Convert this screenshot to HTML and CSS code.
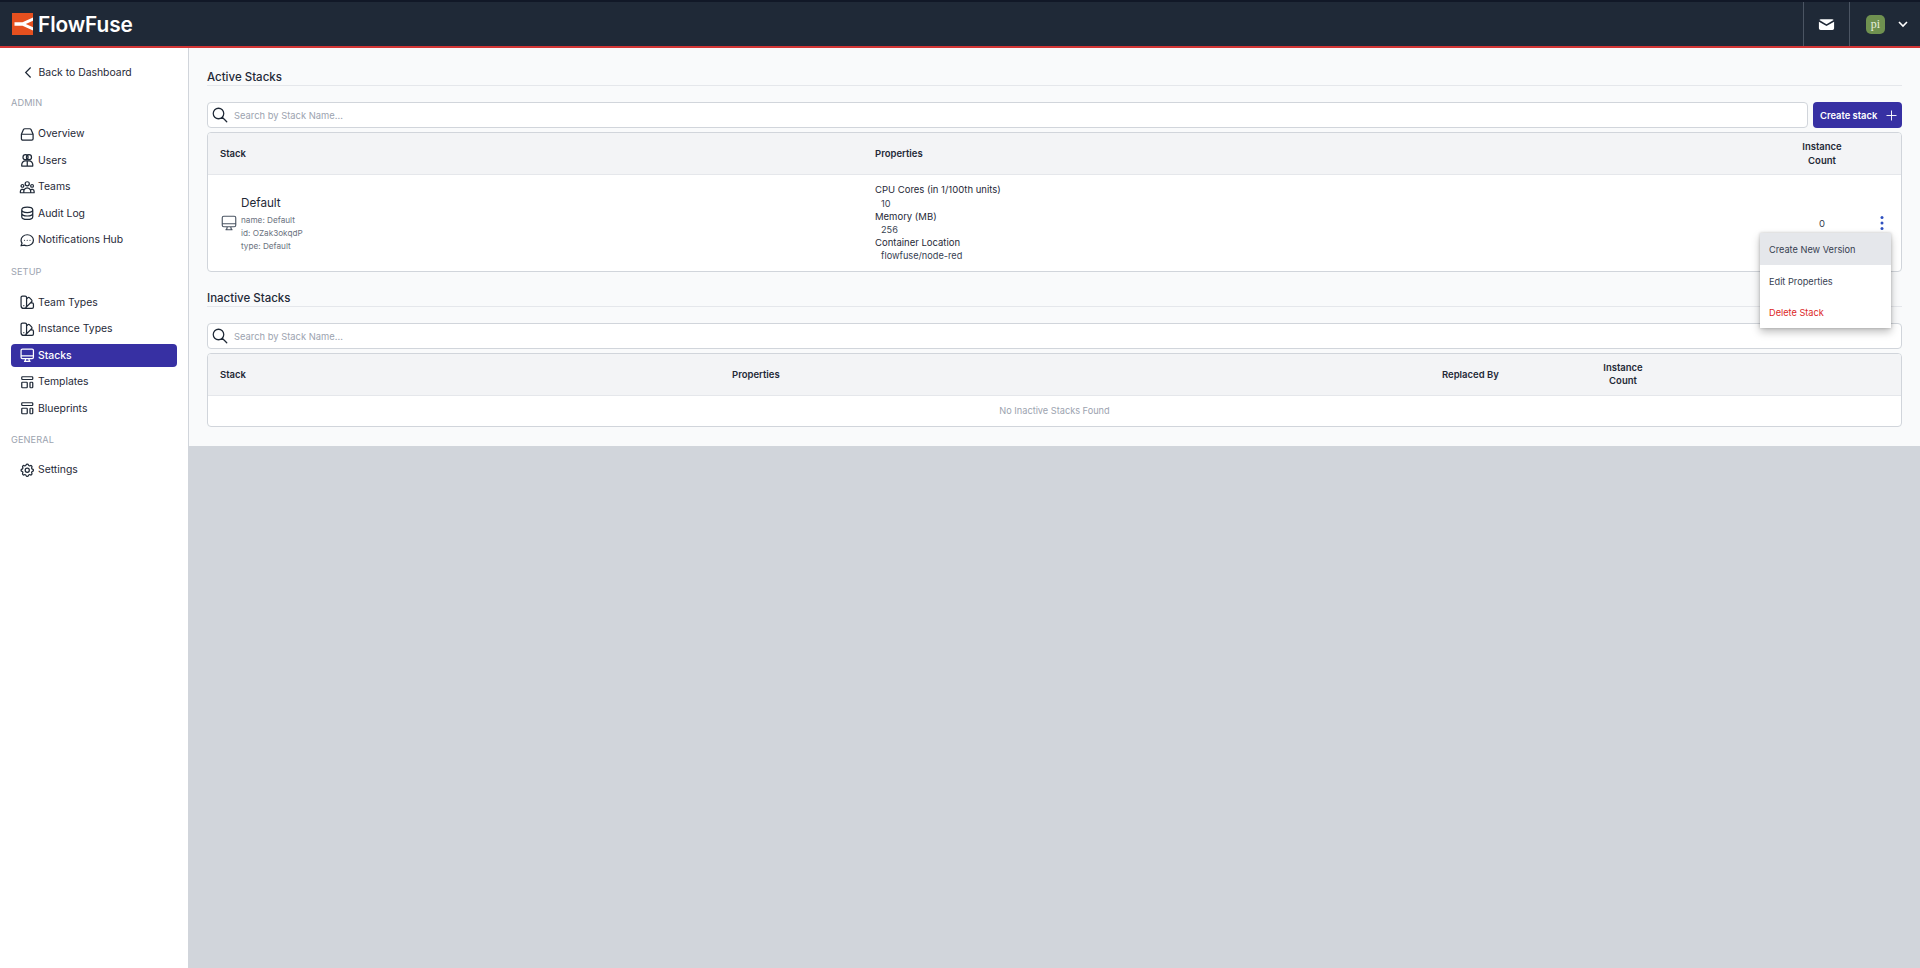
FILE: index.html
```html
<!DOCTYPE html>
<html lang="en">
<head>
<meta charset="utf-8">
<title>Stacks - FlowFuse</title>
<link rel="stylesheet" href="styles.css">
</head>
<body>
<header class="topbar">
  <a class="logo">
    <svg class="logo-mark" viewBox="0 0 21 22"><rect width="21" height="22" fill="#e5501f"/><path d="M21 4.500 10.500 9.200H2.500v3.600h8L21 17.500v-3.300L13.800 11 21 7.800z" fill="#fff"/></svg>
    <span class="logo-text">FlowFuse</span>
  </a>
  <div class="topbar-right">
    <div class="top-cell mail">
      <svg class="mail-icon" viewBox="0 0 20 20"><path d="M2.500 5.200A2 2 0 0 1 4 4.500h12a2 2 0 0 1 1.500.7L10 9.700z" fill="#fff"/><path d="M2 7l8 4.700L18 7v7a1.800 1.800 0 0 1-1.800 1.800H3.800A1.800 1.800 0 0 1 2 14z" fill="#fff"/></svg>
    </div>
    <div class="top-cell user">
      <span class="avatar">pi</span>
      <svg class="chev" viewBox="0 0 12 12"><path d="M2 4l4 4 4-4" fill="none" stroke="#fff" stroke-width="1.600"/></svg>
    </div>
  </div>
</header>
<div class="shell">
  <aside class="sidebar">
    <a class="back"><svg class="back-icon" viewBox="0 0 24 24"><path d="M15 19l-7-7 7-7"/></svg><span>Back to Dashboard</span></a>
    <div class="nav-title first">Admin</div>
    <a class="nav-item"><svg viewBox="0 0 24 24"><path d="M3.500 12h17v6.500a2 2 0 0 1-2 2h-13a2 2 0 0 1-2-2zM3.500 12 6.500 5.200A2.200 2.200 0 0 1 8.500 4h7a2.200 2.200 0 0 1 2 1.200l3 6.800"/></svg>Overview</a>
    <a class="nav-item"><svg viewBox="0 0 24 24"><circle cx="9.500" cy="7.500" r="3.700"/><circle cx="14.500" cy="7.500" r="3.700"/><path d="M4 20.500v-2.200A5.300 5.300 0 0 1 9.300 13h5.400a5.300 5.300 0 0 1 5.300 5.300v2.200zM12 13.500v7"/></svg>Users</a>
    <a class="nav-item"><svg viewBox="0 0 24 24"><path d="M17 20h5v-2a3 3 0 00-5.356-1.857M17 20H7m10 0v-2c0-.656-.126-1.283-.356-1.857M7 20H2v-2a3 3 0 015.356-1.857M7 20v-2c0-.656.126-1.283.356-1.857m0 0a5.002 5.002 0 019.288 0M15 7a3 3 0 11-6 0 3 3 0 016 0zm6 3a2 2 0 11-4 0 2 2 0 014 0zM7 10a2 2 0 11-4 0 2 2 0 014 0z"/></svg>Teams</a>
    <a class="nav-item"><svg viewBox="0 0 24 24"><path d="M4 7v10c0 2.210 3.582 4 8 4s8-1.790 8-4V7M4 7c0 2.210 3.582 4 8 4s8-1.790 8-4M4 7c0-2.210 3.582-4 8-4s8 1.790 8 4m0 5c0 2.210-3.582 4-8 4s-8-1.790-8-4"/></svg>Audit Log</a>
    <a class="nav-item"><svg viewBox="0 0 24 24"><path d="M8 12h.01M12 12h.01M16 12h.01M21 12c0 4.418-4.030 8-9 8a9.863 9.863 0 01-4.255-.949L3 20l1.395-3.720C3.512 15.042 3 13.574 3 12c0-4.418 4.030-8 9-8s9 3.582 9 8z"/></svg>Notifications Hub</a>
    <div class="nav-title">Setup</div>
    <a class="nav-item"><svg viewBox="0 0 24 24"><path d="M7 21a4 4 0 01-4-4V5a2 2 0 012-2h4a2 2 0 012 2v12a4 4 0 01-4 4zm0 0h12a2 2 0 002-2v-4a2 2 0 00-2-2h-2.343M11 7.343l1.657-1.657a2 2 0 012.828 0l2.829 2.829a2 2 0 010 2.828l-8.486 8.485M7 17h.01"/></svg>Team Types</a>
    <a class="nav-item"><svg viewBox="0 0 24 24"><path d="M7 21a4 4 0 01-4-4V5a2 2 0 012-2h4a2 2 0 012 2v12a4 4 0 01-4 4zm0 0h12a2 2 0 002-2v-4a2 2 0 00-2-2h-2.343M11 7.343l1.657-1.657a2 2 0 012.828 0l2.829 2.829a2 2 0 010 2.828l-8.486 8.485M7 17h.01"/></svg>Instance Types</a>
    <a class="nav-item active"><svg viewBox="0 0 24 24"><path d="M9.750 17L9 20l-1 1h8l-1-1-.75-3M3 13h18M5 17h14a2 2 0 002-2V5a2 2 0 00-2-2H5a2 2 0 00-2 2v10a2 2 0 002 2z"/></svg>Stacks</a>
    <a class="nav-item"><svg viewBox="0 0 24 24"><path d="M4 5a1 1 0 011-1h14a1 1 0 011 1v2a1 1 0 01-1 1H5a1 1 0 01-1-1V5zM4 13a1 1 0 011-1h6a1 1 0 011 1v6a1 1 0 01-1 1H5a1 1 0 01-1-1v-6zM16 13a1 1 0 011-1h2a1 1 0 011 1v6a1 1 0 01-1 1h-2a1 1 0 01-1-1v-6z"/></svg>Templates</a>
    <a class="nav-item"><svg viewBox="0 0 24 24"><path d="M4 5a1 1 0 011-1h14a1 1 0 011 1v2a1 1 0 01-1 1H5a1 1 0 01-1-1V5zM4 13a1 1 0 011-1h6a1 1 0 011 1v6a1 1 0 01-1 1H5a1 1 0 01-1-1v-6zM16 13a1 1 0 011-1h2a1 1 0 011 1v6a1 1 0 01-1 1h-2a1 1 0 01-1-1v-6z"/></svg>Blueprints</a>
    <div class="nav-title last">General</div>
    <a class="nav-item"><svg viewBox="0 0 24 24"><path d="M10.325 4.317c.426-1.756 2.924-1.756 3.350 0a1.724 1.724 0 002.573 1.066c1.543-.94 3.310.826 2.370 2.370a1.724 1.724 0 001.065 2.572c1.756.426 1.756 2.924 0 3.350a1.724 1.724 0 00-1.066 2.573c.94 1.543-.826 3.310-2.370 2.370a1.724 1.724 0 00-2.572 1.065c-.426 1.756-2.924 1.756-3.350 0a1.724 1.724 0 00-2.573-1.066c-1.543.94-3.310-.826-2.370-2.370a1.724 1.724 0 00-1.065-2.572c-1.756-.426-1.756-2.924 0-3.350a1.724 1.724 0 001.066-2.573c-.94-1.543.826-3.310 2.370-2.370.996.608 2.296.07 2.572-1.065z"/><path d="M15 12a3 3 0 11-6 0 3 3 0 016 0z"/></svg>Settings</a>
  </aside>
  <main class="main">
    <div class="content">
      <h2 class="section-title">Active Stacks</h2>
      <div class="toolbar">
        <label class="search"><svg viewBox="0 0 24 24"><path d="M21 21l-6-6m2-5a7 7 0 11-14 0 7 7 0 0114 0z"/></svg><span class="placeholder">Search by Stack Name...</span></label>
        <button class="btn-primary">Create stack<svg viewBox="0 0 24 24"><path d="M12 4v16M4 12h16"/></svg></button>
      </div>
      <div class="table active-table">
        <div class="row head">
          <div class="cell">Stack</div>
          <div class="cell">Properties</div>
          <div class="cell center">Instance<br>Count</div>
          <div class="cell"></div>
        </div>
        <div class="row body">
          <div class="cell stack-cell">
            <svg class="stack-icon" viewBox="0 0 24 24"><path d="M9.750 17L9 20l-1 1h8l-1-1-.75-3M3 13h18M5 17h14a2 2 0 002-2V5a2 2 0 00-2-2H5a2 2 0 00-2 2v10a2 2 0 002 2z"/></svg>
            <div class="stack-info">
              <div class="stack-name">Default</div>
              <div class="stack-meta">name: Default</div>
              <div class="stack-meta">id: OZak3okqdP</div>
              <div class="stack-meta">type: Default</div>
            </div>
          </div>
          <div class="cell props">
            <div class="prop">CPU Cores (in 1/100th units)</div>
            <div class="val">10</div>
            <div class="prop">Memory (MB)</div>
            <div class="val">256</div>
            <div class="prop">Container Location</div>
            <div class="val">flowfuse/node-red</div>
          </div>
          <div class="cell center count">0</div>
          <div class="cell kebab"><svg viewBox="0 0 6 16"><circle cx="3" cy="2.500" r="1.500"/><circle cx="3" cy="8" r="1.500"/><circle cx="3" cy="13.500" r="1.500"/></svg></div>
        </div>
      </div>
      <h2 class="section-title second">Inactive Stacks</h2>
      <div class="toolbar">
        <label class="search"><svg viewBox="0 0 24 24"><path d="M21 21l-6-6m2-5a7 7 0 11-14 0 7 7 0 0114 0z"/></svg><span class="placeholder">Search by Stack Name...</span></label>
      </div>
      <div class="table inactive-table">
        <div class="row head">
          <div class="cell">Stack</div>
          <div class="cell">Properties</div>
          <div class="cell">Replaced By</div>
          <div class="cell center tight">Instance<br>Count</div>
          <div class="cell"></div>
        </div>
        <div class="empty">No Inactive Stacks Found</div>
      </div>
      <ul class="menu">
        <li class="menu-item hover">Create New Version</li>
        <li class="menu-item">Edit Properties</li>
        <li class="menu-item danger">Delete Stack</li>
      </ul>
    </div>
  </main>
</div>
</body>
</html>
```
FILE: styles.css
```css
* { box-sizing: border-box; }
html, body { margin: 0; height: 100%; }
body {
  font-family: Inter, "Liberation Sans", sans-serif;
  font-size: 10.400px;
  color: #1f2937;
  background: #d1d5db;
  height: 968px;
  overflow: hidden;
}
.topbar {
  height: 48px;
  background: #1f2937;
  border-top: 2px solid #111827;
  border-bottom: 2px solid #d33535;
  display: flex;
  justify-content: space-between;
  align-items: stretch;
}
.logo { display: flex; align-items: center; padding-left: 12px; gap: 5px; }
.logo-mark { width: 21px; height: 22px; display: block; }
.logo-text { font-size: 20.800px; font-weight: 600; color: #fff; letter-spacing: -0.1px; }
.topbar-right { display: flex; }
.top-cell { display: flex; align-items: center; border-left: 1px solid #4b5563; }
.mail { width: 46px; justify-content: center; }
.mail-icon { width: 19px; height: 19px; }
.user { width: 71px; padding-left: 16px; gap: 12px; }
.avatar {
  width: 19px; height: 19px; border-radius: 5px; background: #6f9150; color: #e8efdf;
  font-family: "Liberation Serif", serif; font-size: 12px;
  display: flex; align-items: center; justify-content: center;
}
.chev { width: 12px; height: 12px; }
.shell { display: flex; height: 920px; }
.sidebar {
  width: 189px;
  flex: none;
  background: #fff;
  border-right: 1px solid #d1d5db;
  padding: 10px 11px 0;
}
.sidebar a { display: flex; align-items: center; color: #1f2937; }
.back { height: 26px; padding-left: 9px; gap: 1.500px; margin-top: 1px; }
.back-icon { width: 17px; height: 17px; flex: none; fill: none; stroke: #1f2937; stroke-width: 1.700; }
.nav-title {
  font-size: 9.200px;
  color: #9ca3af;
  text-transform: uppercase;
  letter-spacing: 0.1px;
  line-height: 12px;
  margin: 13px 0 11px;
}
.nav-title.first { margin-top: 12px; margin-bottom: 11.500px; }
.nav-title.last { margin-top: 12px; margin-bottom: 11px; }
.nav-item { height: 26.500px; padding-left: 8px; gap: 2.500px; border-radius: 4px; }
.nav-item svg { width: 16.500px; height: 16.500px; flex: none; fill: none; stroke: #1f2937; stroke-width: 1.800; stroke-linejoin: round; stroke-linecap: round; }
.sidebar .nav-item.active { background: #3730a3; color: #fff; font-weight: 500; height: 23px; margin: 1.500px 0 2px; }
.nav-item.active svg { stroke: #fff; }
.main { flex: 1; min-width: 0; }
.content {
  position: relative;
  background: #f9fafb;
  height: 398px;
  padding: 20px 18px 0 18px;
}
.section-title {
  margin: 0;
  font-size: 11.500px;
  font-weight: 500;
  line-height: 19px;
  height: 18px;
  border-bottom: 1px solid #e5e7eb;
  color: #1f2937;
}
.section-title.second { margin-top: 17px; }
.toolbar { display: flex; gap: 5px; margin-top: 16px; height: 26px; }
.search {
  flex: 1;
  display: flex;
  align-items: center;
  background: #fff;
  border: 1px solid #d1d5db;
  border-radius: 4px;
  padding-left: 3px;
  gap: 5px;
}
.search svg { width: 18px; height: 18px; fill: none; stroke: #1f2937; stroke-width: 1.700; stroke-linecap: round; }
.placeholder { color: #9ca3af; font-size: 9.400px; }
.btn-primary {
  width: 89px;
  border: 0;
  border-radius: 4px;
  background: #3730a3;
  color: #fff;
  font: 600 9.400px Inter, sans-serif;
  display: flex;
  align-items: center;
  gap: 7px;
  padding: 0 0 0 7px;
}
.btn-primary svg { width: 15px; height: 15px; fill: none; stroke: #fff; stroke-width: 1.500; }
.table {
  margin-top: 4px;
  background: #fff;
  border: 1px solid #d1d5db;
  border-radius: 4px;
  overflow: hidden;
}
.row { display: grid; align-items: center; }
.active-table .row { grid-template-columns: 655px 1fr 66px 46px; }
.inactive-table .row { grid-template-columns: 512px 710px 160px 66px 1fr; }
.head { height: 42px; background: #f3f4f6; border-bottom: 1px solid #e5e7eb; font-weight: 600; font-size: 9.500px; line-height: 14px; color: #1f2937; }
.body { height: 96px; font-size: 9.500px; }
.cell { padding-left: 12px; }
.center { text-align: center; padding-left: 0; }
.tight { line-height: 12.500px; }
.count { color: #374151; }
.stack-cell { display: flex; align-items: center; gap: 3px; }
.stack-icon { width: 18px; height: 18px; fill: none; stroke: #4b5563; stroke-width: 1.500; stroke-linejoin: round; flex: none; }
.stack-name { font-size: 11.700px; line-height: 21px; color: #1f2937; }
.stack-meta { font-size: 8.200px; line-height: 13.200px; color: #6b7280; }
.props { font-size: 9.200px; line-height: 13.200px; }
.prop { font-size: 9.500px; }
.val { padding-left: 6px; color: #374151; }
.kebab { padding: 0 0 0 7px; display: flex; justify-content: center; }
.kebab svg { width: 6px; height: 16px; fill: #2e50c0; }
.empty { height: 30px; line-height: 30px; text-align: center; color: #9ca3af; font-size: 9.200px; }
.menu {
  position: absolute;
  top: 185px;
  right: 29px;
  width: 131px;
  margin: 0;
  padding: 0;
  list-style: none;
  background: #fff;
  box-shadow: 0 4px 8px rgba(0,0,0,0.25), 0 0 3px rgba(0,0,0,0.2);
}
.menu-item { height: 31.670px; line-height: 31.670px; padding: 1px 0 0 9px; font-size: 9.200px; color: #374151; }
.menu-item.hover { background: #e5e7eb; }
.menu-item.danger { color: #dc2626; }
```
